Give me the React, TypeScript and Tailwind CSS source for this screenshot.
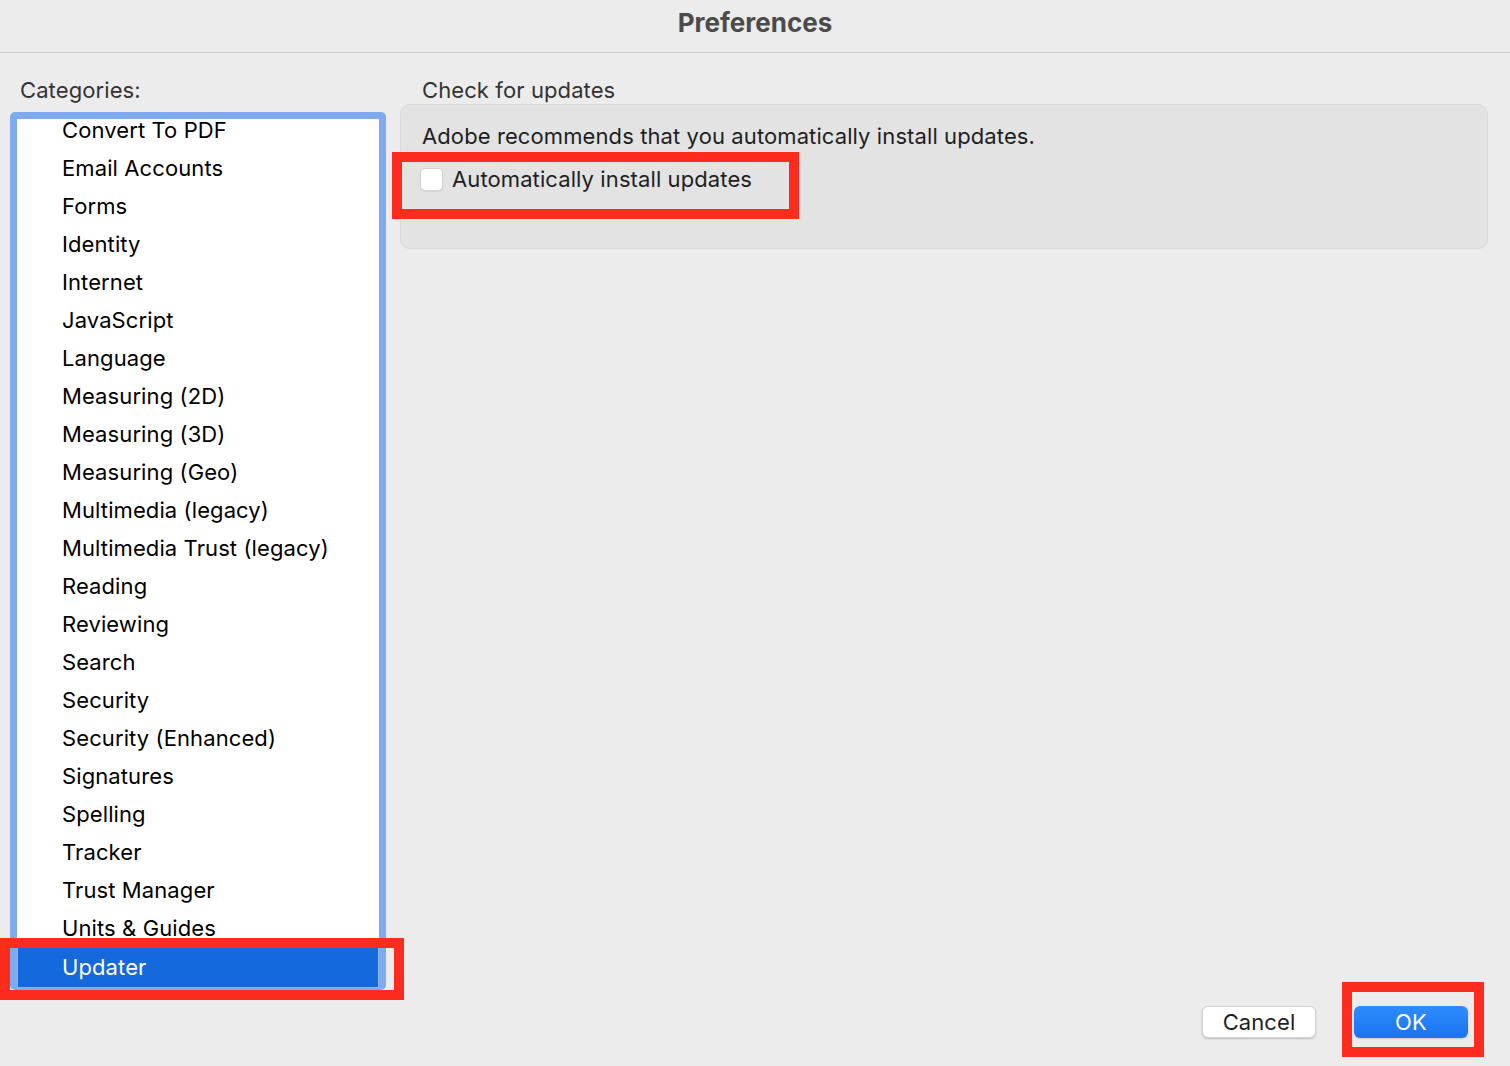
import React from 'react';

const categories = [
  'Convert To PDF',
  'Email Accounts',
  'Forms',
  'Identity',
  'Internet',
  'JavaScript',
  'Language',
  'Measuring (2D)',
  'Measuring (3D)',
  'Measuring (Geo)',
  'Multimedia (legacy)',
  'Multimedia Trust (legacy)',
  'Reading',
  'Reviewing',
  'Search',
  'Security',
  'Security (Enhanced)',
  'Signatures',
  'Spelling',
  'Tracker',
  'Trust Manager',
  'Units & Guides',
  'Updater',
];

const Highlight: React.FC<{ className: string }> = ({ className }) => (
  <div className={`pointer-events-none absolute border-[10px] border-[#fe2b1f] ${className}`} />
);

const App: React.FC = () => {
  const selected = 'Updater';

  return (
    <div className="relative flex h-[1066px] w-[1510px] flex-col overflow-hidden bg-[#ececec] font-['Inter',sans-serif] tracking-[0.1px] text-[#1c1c1c]">
      {/* title bar */}
      <div className="flex h-[53px] shrink-0 items-center justify-center border-b border-[#c9c9c9] bg-[#ececec] pb-[8px]">
        <span className="text-[26px] font-bold tracking-normal text-[#4b4b4b]">Preferences</span>
      </div>

      {/* body */}
      <div className="flex flex-1 pt-[24px]">
        <div className="ml-[10px] flex w-[376px] flex-col">
          <div className="h-[26px] pl-[10px] text-[22px] leading-[26px] text-[#333]">Categories:</div>
          <div className="mt-[9px] h-[878px] overflow-hidden rounded-[5px] border-[7px] border-b-[2px] border-[#7eaaee] bg-white">
            <ul className="-mt-[8px]">
              {categories.map((name) => (
                <li
                  key={name}
                  className={
                    name === selected
                      ? 'flex h-[41px] items-center border border-[#8fb6ee] bg-[#1469dc] pl-[44px] text-[22px] text-white'
                      : 'flex h-[38px] items-center pl-[45px] text-[22px] text-black'
                  }
                >
                  {name}
                </li>
              ))}
            </ul>
          </div>
        </div>

        <div className="ml-[14px] flex w-[1088px] flex-col">
          <div className="h-[26px] pl-[22px] text-[22px] leading-[26px] text-[#333]">Check for updates</div>
          <div className="mt-[1px] h-[145px] rounded-[10px] border border-[#d9d9d9] bg-[#e3e3e3] pl-[21px] pt-[18px]">
            <p className="h-[26px] text-[22px] leading-[26px] text-[#1f1f1f]">
              Adobe recommends that you automatically install updates.
            </p>
            <label className="mt-[17px] flex h-[26px] items-center gap-[9px]">
              <span className="-ml-[2px] h-[23px] w-[23px] rounded-[5px] border border-[#d2d2d2] bg-white shadow-[0_1px_1px_rgba(0,0,0,0.08)]" />
              <span className="text-[22px] leading-[26px] text-[#1f1f1f]">Automatically install updates</span>
            </label>
          </div>
        </div>
      </div>

      {/* footer buttons */}
      <div className="flex h-[60px] shrink-0 justify-end gap-[38px] pb-[28px] pr-[42px]">
        <button className="flex h-[32px] w-[114px] items-center justify-center rounded-[6px] border border-[#d4d4d4] bg-white text-[22px] text-[#1f1f1f] shadow-[0_1px_2px_rgba(0,0,0,0.2)]">
          Cancel
        </button>
        <button className="flex h-[32px] w-[114px] items-center justify-center rounded-[6px] bg-gradient-to-b from-[#2f8dff] to-[#1a73ef] text-[22px] text-white shadow-[0_1px_2px_rgba(0,0,0,0.15)]">
          OK
        </button>
      </div>

      {/* red annotation boxes */}
      <Highlight className="left-[392px] top-[152px] h-[67px] w-[407px]" />
      <Highlight className="left-0 top-[938px] h-[62px] w-[404px]" />
      <Highlight className="left-[1342px] top-[982px] h-[75px] w-[142px]" />
    </div>
  );
};

export default App;
